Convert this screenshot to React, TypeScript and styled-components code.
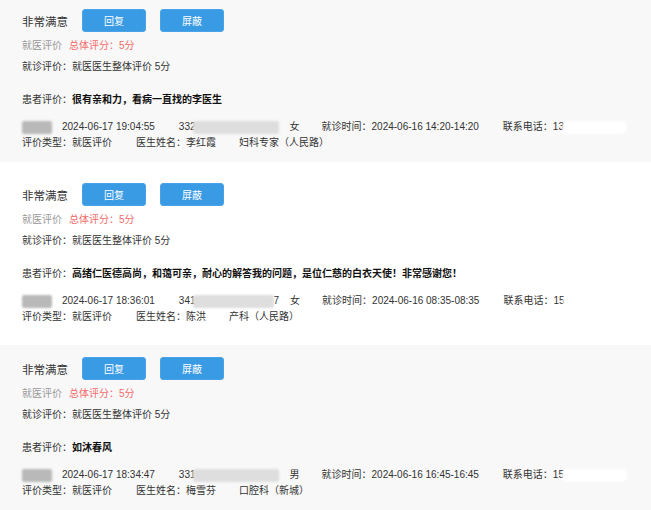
import React, { FC } from 'react';
import styled, { createGlobalStyle } from 'styled-components';

const GlobalStyle = createGlobalStyle`
	body {
		margin: 0;
		background: #fff;
		font-family: "Liberation Sans", Arial, "Noto Sans CJK SC", sans-serif;
		font-size: 10px;
		color: #333;
	}
`;

const ReviewList = styled.div`
	margin-top: -3px;
	overflow: hidden;
`;

const ReviewCard = styled.div<{ $shaded: boolean }>`
	background: ${({ $shaded }) => ($shaded ? '#f8f8f8' : '#fff')};
	padding: 12px 0 11px 22px;
	margin-bottom: 9px;
`;

const CardHeader = styled.div`
	display: flex;
	align-items: center;
	height: 23px;
`;

const Verdict = styled.span`
	font-size: 11.5px;
	color: #333;
	margin-right: 14px;
`;

const ActionButton = styled.button`
	width: 64px;
	height: 23px;
	margin-right: 14px;
	padding: 0;
	border: 1px solid #4aa3e8;
	border-radius: 3px;
	background: #3a9be5;
	color: #fff;
	font-family: inherit;
	font-size: 10px;
	cursor: pointer;
`;

const Line = styled.div<{ $gap: number }>`
	display: flex;
	align-items: center;
	height: 16px;
	line-height: 16px;
	margin-top: ${({ $gap }) => $gap}px;
	white-space: nowrap;
`;

const Muted = styled.span`
	color: #999;
	margin-right: 7px;
`;

const Score = styled.span`
	color: #f36b6b;
`;

const Strong = styled.b`
	color: #111;
	font-weight: bold;
`;

const Field = styled.span<{ $after: number }>`
	display: inline-flex;
	align-items: center;
	margin-right: ${({ $after }) => $after}px;
`;

const Blur = styled.span<{ $w: number; $tone: string }>`
	display: inline-block;
	width: ${({ $w }) => $w}px;
	height: 13px;
	background: ${({ $tone }) => $tone};
	filter: blur(1.2px);
	border-radius: 2px;
`;

interface Review {
	comment: string;
	visitedAt: string;
	idHead: string;
	idBlur: number;
	idTail: string;
	gender: string;
	visitTime: string;
	phone: string;
	doctor: string;
	dept: string;
}

const reviews: Review[] = [
	{
		comment: '很有亲和力，看病一直找的李医生',
		visitedAt: '2024-06-17 19:04:55',
		idHead: '332',
		idBlur: 86,
		idTail: '',
		gender: '女',
		visitTime: '2024-06-16 14:20-14:20',
		phone: '13',
		doctor: '李红霞',
		dept: '妇科专家（人民路）',
	},
	{
		comment: '高绪仁医德高尚，和蔼可亲，耐心的解答我的问题，是位仁慈的白衣天使！非常感谢您！',
		visitedAt: '2024-06-17 18:36:01',
		idHead: '341',
		idBlur: 81,
		idTail: '7',
		gender: '女',
		visitTime: '2024-06-16 08:35-08:35',
		phone: '15',
		doctor: '陈洪',
		dept: '产科（人民路）',
	},
	{
		comment: '如沐春风',
		visitedAt: '2024-06-17 18:34:47',
		idHead: '331',
		idBlur: 86,
		idTail: '',
		gender: '男',
		visitTime: '2024-06-16 16:45-16:45',
		phone: '15',
		doctor: '梅雪芬',
		dept: '口腔科（新城）',
	},
];

const ReviewItem: FC<{ review: Review; shaded: boolean }> = ({ review, shaded }) => (
	<ReviewCard $shaded={shaded}>
		<CardHeader>
			<Verdict>非常满意</Verdict>
			<ActionButton>回复</ActionButton>
			<ActionButton>屏蔽</ActionButton>
		</CardHeader>
		<Line $gap={6}>
			<Muted>就医评价</Muted>
			<Score>总体评分：5分</Score>
		</Line>
		<Line $gap={5}>就诊评价：就医医生整体评价 5分</Line>
		<Line $gap={17}>
			患者评价：<Strong>{review.comment}</Strong>
		</Line>
		<Line $gap={11}>
			<Field $after={10}>
				<Blur $w={30} $tone="#b9b9b9" />
			</Field>
			<Field $after={24}>{review.visitedAt}</Field>
			<Field $after={11}>
				{review.idHead}
				<Blur $w={review.idBlur} $tone="#dedede" style={{ marginLeft: -3 }} />
				{review.idTail}
			</Field>
			<Field $after={22}>{review.gender}</Field>
			<Field $after={24}>就诊时间：{review.visitTime}</Field>
			<Field $after={0}>
				联系电话：{review.phone}
				<Blur $w={65} $tone="#fff" style={{ marginLeft: -2, borderRadius: 6 }} />
			</Field>
		</Line>
		<Line $gap={0}>
			<Field $after={24}>评价类型：就医评价</Field>
			<Field $after={23}>医生姓名：{review.doctor}</Field>
			<Field $after={0}>{review.dept}</Field>
		</Line>
	</ReviewCard>
);

const App: FC = () => (
	<>
		<GlobalStyle />
		<ReviewList>
			{reviews.map((review, i) => (
				<ReviewItem key={review.visitedAt} review={review} shaded={i % 2 === 0} />
			))}
		</ReviewList>
	</>
);

export default App;
